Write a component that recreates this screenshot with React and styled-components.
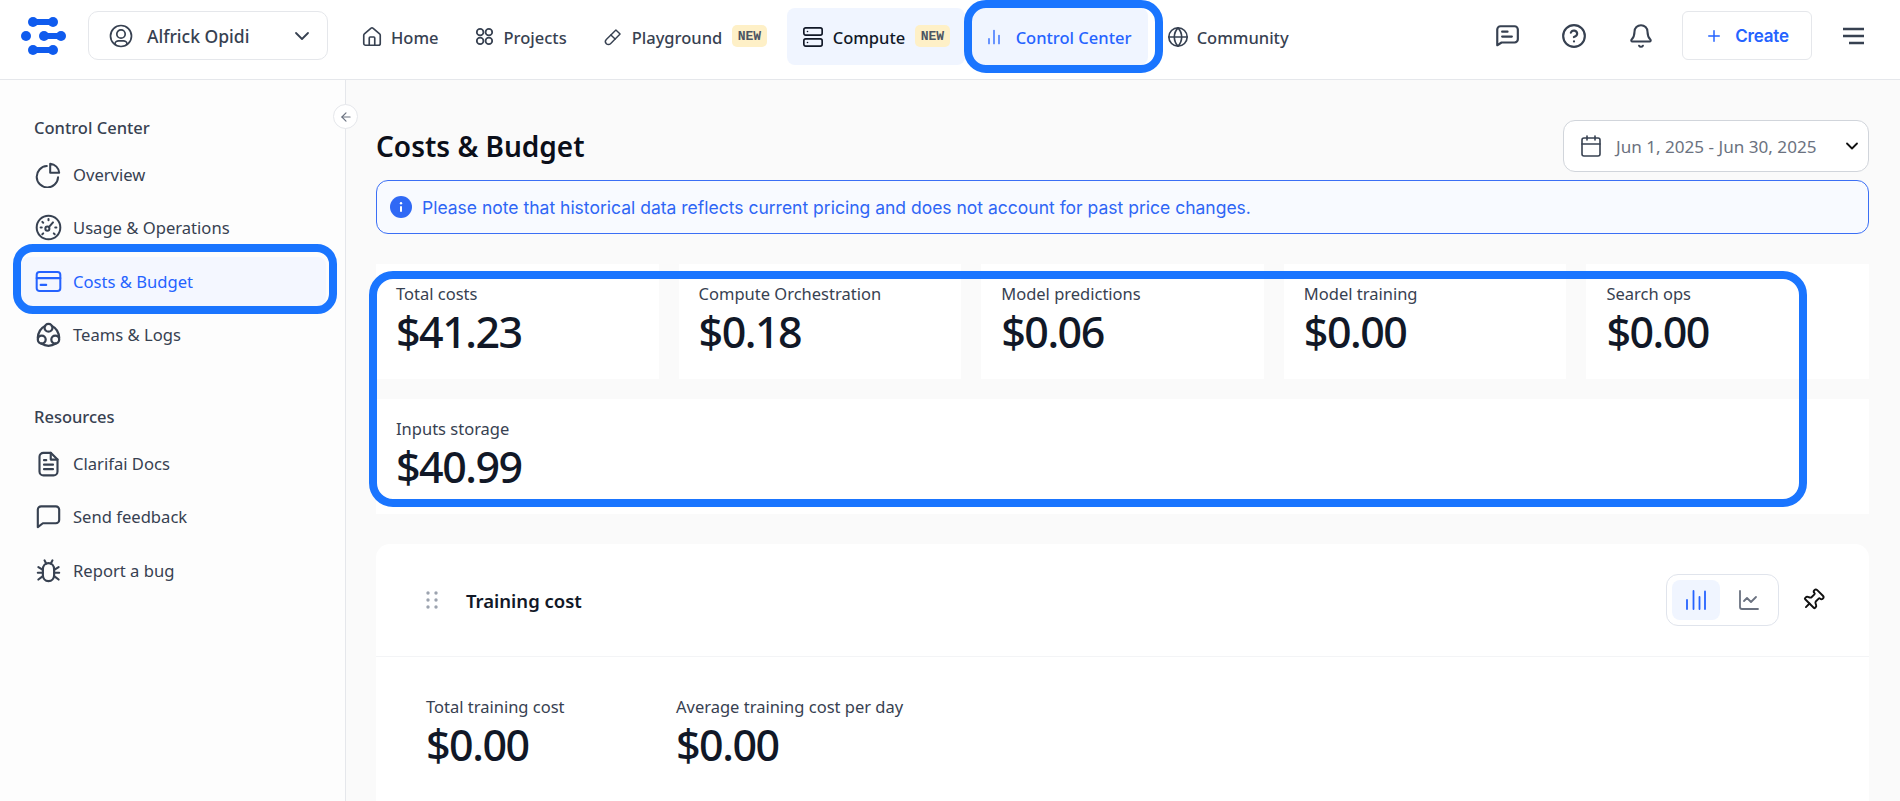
import React from "react";
import styled, { createGlobalStyle } from "styled-components";
import { House, Server, Globe, CircleHelp, Bell, Plus, ChevronDown, ArrowLeft, Calendar, Pin, ChartLine } from "lucide-react";

const Global = createGlobalStyle`
  html, body { margin: 0; padding: 0; height: 100%; background: #fafafa; }
  body { font-family: "Noto Sans", "Open Sans", sans-serif; color: #374151; overflow: hidden; }
  * { box-sizing: border-box; }
`;

const Page = styled.div`display: flex; flex-direction: column; height: 801px; overflow: hidden;`;
const Header = styled.header`
  height: 80px; flex: none; display: flex; align-items: center; padding: 0 36px 8px 21px;
  background: #fff; border-bottom: 1px solid #e5e7eb;
`;
const LogoMark = styled.svg`width: 45px; height: 38px; flex: none; margin-top: 1px;`;
const AccountSelect = styled.div`
  margin-left: 22px; width: 240px; height: 49px; flex: none; display: flex; align-items: center;
  padding: 0 13px 0 20px; gap: 14px; border: 1px solid #e5e7eb; border-radius: 10px; background: #fff;
  font-size: 17.5px; font-weight: 500; color: #374151;
`;
const Grow = styled.span`flex: 1;`;
const Nav = styled.nav`display: flex; align-items: center; margin-left: 18px; gap: 4px; margin-top: 2px;`;
const Tab = styled.div`
  position: relative; height: 57px; display: flex; align-items: center; gap: ${(p) => p.$gap ?? 9}px;
  padding: ${(p) => p.$pad ?? "0 16px"}; padding-top: 2px; border-radius: 8px; white-space: nowrap; flex: none;
  width: ${(p) => (p.$w ? `${p.$w}px` : "auto")};
  margin: 0 ${(p) => p.$mr ?? 0}px 0 ${(p) => p.$ml ?? 0}px;
  font-size: 16.5px; font-weight: 500;
  color: ${(p) => (p.$accent ? "#2563ff" : p.$dark ? "#111827" : "#374151")};
  background: ${(p) => (p.$tint ? "#f0f5ff" : "transparent")};
  & > svg { margin-top: -2px; }
`;
const NewBadge = styled.span`
  font-family: "Liberation Mono", monospace; font-size: 13px; font-weight: 700; color: #4b5563;
  background: #fef0c7; border-radius: 5px; height: 22px; padding: 0 5.5px; display: inline-flex; align-items: center;
  margin-left: 1px; margin-top: -3px;
`;
const TopActions = styled.div`margin-left: auto; display: flex; align-items: center; color: #374151;`;
const IconSlot = styled.span`display: inline-flex; margin-right: ${(p) => p.$mr ?? 0}px;`;
const CreateButton = styled.button`
  width: 130px; height: 49px; border: 1px solid #e5e7eb; border-radius: 6px; background: #fff;
  display: flex; align-items: center; justify-content: center; gap: 12px; margin: 0 31px 0 28px;
  color: #2563ff; font-family: Inter, sans-serif; font-size: 17px; font-weight: 600; letter-spacing: -0.2px;
`;
const Body = styled.div`flex: 1; display: flex; min-height: 0;`;
const Sidebar = styled.aside`
  position: relative; width: 346px; flex: none; padding: 36px 19px 0 21px; background: #fdfdfd; border-right: 1px solid #e5e7eb;
`;
const CollapseButton = styled.span`
  position: absolute; top: 24px; right: -13px; width: 25px; height: 25px; border-radius: 50%;
  background: #fff; border: 1px solid #e5e7eb; display: flex; align-items: center; justify-content: center; color: #6b7280; z-index: 2;
`;
const SideHeading = styled.div`
  padding-left: 13px; font-size: 16.5px; line-height: 24px; font-weight: 500; color: #374151; margin-bottom: 10px;
  margin-top: ${(p) => p.$top ?? 0}px;
`;
const SideList = styled.div`display: flex; flex-direction: column; gap: 4.33px;`;
const SideItem = styled.div`
  position: relative; height: 49px; display: flex; align-items: center; gap: 11px; padding-left: 14px; border-radius: 8px;
  font-size: 16.6px; color: ${(p) => (p.$active ? "#2563ff" : "#374151")};
  background: ${(p) => (p.$active ? "#f4f7ff" : "transparent")};
`;
const Main = styled.main`flex: 1; min-width: 0; padding: 40px 31px 0 30px; background: #fafafa; overflow: hidden;`;
const TitleRow = styled.div`display: flex; align-items: center; justify-content: space-between; height: 52px;`;
const Title = styled.h1`margin: 0; font-size: 28px; font-weight: 600; color: #0b0f19;`;
const DatePicker = styled.div`
  width: 306px; height: 52px; border: 1px solid #d1d5db; border-radius: 12px; background: #fff; flex: none;
  display: flex; align-items: center; padding: 0 16px 0 15px; gap: 13px; color: #6b7280; font-size: 17.1px; white-space: nowrap;
`;
const Banner = styled.div`
  margin-top: 8px; height: 54px; border: 1px solid #3b6ff5; border-radius: 12px; background: #f8faff;
  display: flex; align-items: center; gap: 10px; padding: 0 13px; color: #2f66f5;
  font-family: Inter, sans-serif; font-size: 17.5px;
`;
const StatsWrap = styled.section`
  position: relative; margin-top: 30px; display: grid; grid-template-columns: repeat(5, 1fr); gap: 20px;
`;
const StatCard = styled.div`
  height: 115px; padding: 18px 20px; background: #fff; grid-column: ${(p) => (p.$wide ? "1 / -1" : "auto")};
`;
const StatLabel = styled.div`font-size: 16.5px; line-height: 24px; color: #374151; white-space: nowrap;`;
const StatValue = styled.div`font-size: 43px; line-height: 52px; font-weight: 500; color: #111827; letter-spacing: -1.5px;`;
const Callout = styled.span`
  position: absolute; border: 8px solid #1a75ff; pointer-events: none; z-index: 3;
  inset: ${(p) => p.$inset}; border-radius: ${(p) => p.$radius}px;
`;
const ChartCard = styled.section`margin-top: 30px; background: #fff; border-radius: 14px; min-height: 400px;`;
const ChartHead = styled.div`
  height: 113px; display: flex; align-items: center; padding: 0 44px 0 50px; border-bottom: 1px solid #f3f4f6;
`;
const ChartTitle = styled.div`margin-left: 28px; font-size: 18.5px; font-weight: 600; color: #111827; margin-top: 1px;`;
const ViewToggle = styled.div`
  margin-left: auto; width: 113px; height: 52px; border: 1px solid #e0e4ec; border-radius: 12px;
  display: flex; align-items: center; padding: 0 5px; gap: 5px;
`;
const ToggleOption = styled.span`
  width: 50px; height: 40px; border-radius: 8px; display: flex; align-items: center; justify-content: center;
  background: ${(p) => (p.$on ? "#f0f5ff" : "transparent")}; color: ${(p) => (p.$on ? "#2563ff" : "#6b7280")};
`;
const PinSlot = styled.span`display: inline-flex; margin-left: 22px; color: #111; transform: rotate(45deg);`;
const ChartStats = styled.div`display: flex; padding: 38px 50px 0;`;
const ChartStat = styled.div`width: 250px; flex: none;`;
const DarkIcon = styled.span`display: inline-flex; color: ${(p) => p.$color};`;

const Svg = ({ size = 24, sw = 2, children }) => (
  <svg width={size} height={size} viewBox="0 0 24 24" fill="none" stroke="currentColor" strokeWidth={sw} strokeLinecap="round" strokeLinejoin="round">{children}</svg>
);

const Bone = ({ x1, x2, y }) => (
  <g>
    <circle cx={x1} cy={y} r="5" />
    <circle cx={x2} cy={y} r="5" />
    <rect x={x1} y={y - 3} width={x2 - x1} height="6" />
  </g>
);
const Logo = () => (
  <LogoMark viewBox="0 0 45 38" fill="#0f5bee">
    <Bone x1={12} x2={32} y={5} />
    <circle cx="5" cy="19" r="5" />
    <Bone x1={23} x2={40} y={19} />
    <Bone x1={12} x2={32} y={33} />
  </LogoMark>
);
const UserIcon = () => (
  <Svg size={24} sw={1.7}><circle cx="12" cy="12" r="10.5" /><circle cx="12" cy="10" r="4.2" /><path d="M6 20c0-2 2-3.2 3.5-3.2h5c1.5 0 3.5 1.2 3.5 3.2" /></Svg>
);
const ProjectsIcon = () => (
  <Svg size={21} sw={2}><circle cx="7" cy="7" r="3.8" /><circle cx="17" cy="7" r="3.8" /><circle cx="7" cy="17" r="3.8" /><circle cx="17" cy="17" r="3.8" /></Svg>
);
const TubeIcon = () => (
  <Svg size={20} sw={1.7}><path d="M15.5 3.5l5 5L9 20a3.5 3.5 0 0 1-5-5z" /><path d="M9.5 9.5l5 5" /></Svg>
);
const ControlBars = () => (
  <Svg size={20} sw={1.6}><path d="M6 14v6M12 4v16M18 10v10" /></Svg>
);
const ChatIcon = () => (
  <Svg size={26} sw={2}><path d="M3 20.5V6a3 3 0 0 1 3-3h13a3 3 0 0 1 3 3v9a3 3 0 0 1-3 3H7z" /><path d="M7.5 8h5M7.5 12.5h9" /></Svg>
);
const MenuIcon = () => (
  <svg width="21" height="18" viewBox="0 0 21 18" fill="none" stroke="currentColor" strokeWidth="2.4"><path d="M0 2h21M0 9h21M6 16h15" /></svg>
);
const PieIcon = () => (
  <Svg size={27} sw={1.8}><path d="M10.5 4.5a9.5 9.5 0 1 0 10 10" /><path d="M13.5 2.5a8.5 8.5 0 0 1 8 8h-8z" /></Svg>
);
const GaugeIcon = () => (
  <Svg size={27} sw={1.8}><circle cx="12" cy="12" r="10.5" /><circle cx="11" cy="13" r="1.8" /><path d="M12.5 11.5l3.5-4M12 4.5v1M5 12h1M19 12h-1M6.5 7l.8.8M6.5 18l.8-.8M17.5 18l-.8-.8" /></Svg>
);
const CardIcon = () => (
  <Svg size={27} sw={1.8}><rect x="1.5" y="3.5" width="21" height="17" rx="2.5" /><path d="M1.5 9h21M5 15h5" /></Svg>
);
const TeamsIcon = () => (
  <Svg size={27} sw={2}><circle cx="12" cy="6" r="3.5" /><circle cx="6" cy="16.5" r="3.5" /><circle cx="18" cy="16.5" r="3.5" /><path d="M9 4.5C5 6.5 2.8 10 2.5 15M15 4.5c4 2 6.2 5.5 6.5 10.5M5.5 20c4 2.5 9 2.5 13 0" /></Svg>
);
const DocIcon = () => (
  <Svg size={27} sw={1.9}><path d="M4 6a3.5 3.5 0 0 1 3.5-3.5H14l6 6V19a3.5 3.5 0 0 1-3.5 3.5h-9A3.5 3.5 0 0 1 4 19z" /><path d="M14 2.5V8.5h6M8 9h2M8 13h8M8 17h8" /></Svg>
);
const FeedbackIcon = () => (
  <Svg size={27} sw={1.9}><path d="M2.5 21.5V6a3 3 0 0 1 3-3h13a3 3 0 0 1 3 3v9a3 3 0 0 1-3 3H7z" /></Svg>
);
const BugIcon = () => (
  <Svg size={27} sw={1.9}><path d="M7 11c0-3 2-5.5 5-5.5s5 2.5 5 5.5v5c0 3-2 5.5-5 5.5s-5-2.5-5-5.5z" /><path d="M8.5 3l1.5 3M15.5 3l-1.5 3M3 9l4 2.5M21 9l-4 2.5M2.5 14H7M21.5 14H17M3 20l4-3M21 20l-4-3" /></Svg>
);
const InfoIcon = () => (
  <svg width="22" height="22" viewBox="0 0 22 22"><circle cx="11" cy="11" r="11" fill="#3069f5" /><rect x="10" y="10" width="2" height="6" rx="1" fill="#fff" /><circle cx="11" cy="7.2" r="1.2" fill="#fff" /></svg>
);
const DragDots = () => (
  <svg width="12" height="18" viewBox="0 0 12 18" fill="#9ca3af"><circle cx="2" cy="2" r="1.7" /><circle cx="10" cy="2" r="1.7" /><circle cx="2" cy="9" r="1.7" /><circle cx="10" cy="9" r="1.7" /><circle cx="2" cy="16" r="1.7" /><circle cx="10" cy="16" r="1.7" /></svg>
);
const BarsIcon = () => (
  <Svg size={24} sw={1.8}><path d="M3 12v9M9.5 3v18M15.5 9v12M21 3.5V21" /></Svg>
);

const stats = [
  ["Total costs", "$41.23"], ["Compute Orchestration", "$0.18"], ["Model predictions", "$0.06"], ["Model training", "$0.00"], ["Search ops", "$0.00"],
];

export default function App() {
  return (
    <Page>
      <Global />
      <Header>
        <Logo />
        <AccountSelect><UserIcon />Alfrick Opidi<Grow /><ChevronDown size={24} strokeWidth={1.8} /></AccountSelect>
        <Nav>
          <Tab $pad="0 16px 0 15px" $gap={8}><House size={22} strokeWidth={1.8} />Home</Tab>
          <Tab $pad="0 16px 0 15px"><ProjectsIcon />Projects</Tab>
          <Tab $pad="0 0 0 16px"><TubeIcon />Playground<NewBadge>NEW</NewBadge></Tab>
          <Tab $tint $dark $pad="0 15px 0 15px" $ml={16} $mr={-4} $gap={9}><Server size={22} strokeWidth={1.8} />Compute<NewBadge>NEW</NewBadge></Tab>
          <Tab $tint $accent $pad="0 15px 0 19px" $gap={12} $w={183}>
            <ControlBars />Control Center
            <Callout $inset="-8px -15px -8px -1px" $radius={22} />
          </Tab>
          <Tab $pad="0 0 0 15px" $gap={8}><Globe size={22} strokeWidth={1.8} />Community</Tab>
        </Nav>
        <TopActions>
          <IconSlot $mr={41}><ChatIcon /></IconSlot>
          <IconSlot $mr={41}><CircleHelp size={26} strokeWidth={2} /></IconSlot>
          <IconSlot><Bell size={26} strokeWidth={1.9} /></IconSlot>
          <CreateButton><Plus size={18} strokeWidth={2} />Create</CreateButton>
          <MenuIcon />
        </TopActions>
      </Header>
      <Body>
        <Sidebar>
          <CollapseButton><ArrowLeft size={14} /></CollapseButton>
          <SideHeading>Control Center</SideHeading>
          <SideList>
            <SideItem><PieIcon />Overview</SideItem>
            <SideItem><GaugeIcon />Usage &amp; Operations</SideItem>
            <SideItem $active><CardIcon />Costs &amp; Budget<Callout $inset="-12.7px -11px -8.3px -8px" $radius={20} /></SideItem>
            <SideItem><TeamsIcon />Teams &amp; Logs</SideItem>
          </SideList>
          <SideHeading $top={46}>Resources</SideHeading>
          <SideList>
            <SideItem><DocIcon />Clarifai Docs</SideItem>
            <SideItem><FeedbackIcon />Send feedback</SideItem>
            <SideItem><BugIcon />Report a bug</SideItem>
          </SideList>
        </Sidebar>
        <Main>
          <TitleRow>
            <Title>Costs &amp; Budget</Title>
            <DatePicker><DarkIcon $color="#374151"><Calendar size={24} strokeWidth={1.6} /></DarkIcon>Jun 1, 2025 - Jun 30, 2025<Grow /><DarkIcon $color="#111"><ChevronDown size={20} strokeWidth={2.2} /></DarkIcon></DatePicker>
          </TitleRow>
          <Banner><InfoIcon />Please note that historical data reflects current pricing and does not account for past price changes.</Banner>
          <StatsWrap>
            {stats.map(([label, value]) => (
              <StatCard key={label}><StatLabel>{label}</StatLabel><StatValue>{value}</StatValue></StatCard>
            ))}
            <StatCard $wide><StatLabel>Inputs storage</StatLabel><StatValue>$40.99</StatValue></StatCard>
            <Callout $inset="7px 62px 7px -7px" $radius={24} />
          </StatsWrap>
          <ChartCard>
            <ChartHead>
              <DragDots />
              <ChartTitle>Training cost</ChartTitle>
              <ViewToggle>
                <ToggleOption $on><BarsIcon /></ToggleOption>
                <ToggleOption><ChartLine size={24} strokeWidth={1.8} /></ToggleOption>
              </ViewToggle>
              <PinSlot><Pin size={24} strokeWidth={1.9} /></PinSlot>
            </ChartHead>
            <ChartStats>
              <ChartStat><StatLabel>Total training cost</StatLabel><StatValue>$0.00</StatValue></ChartStat>
              <ChartStat><StatLabel>Average training cost per day</StatLabel><StatValue>$0.00</StatValue></ChartStat>
            </ChartStats>
          </ChartCard>
        </Main>
      </Body>
    </Page>
  );
}
